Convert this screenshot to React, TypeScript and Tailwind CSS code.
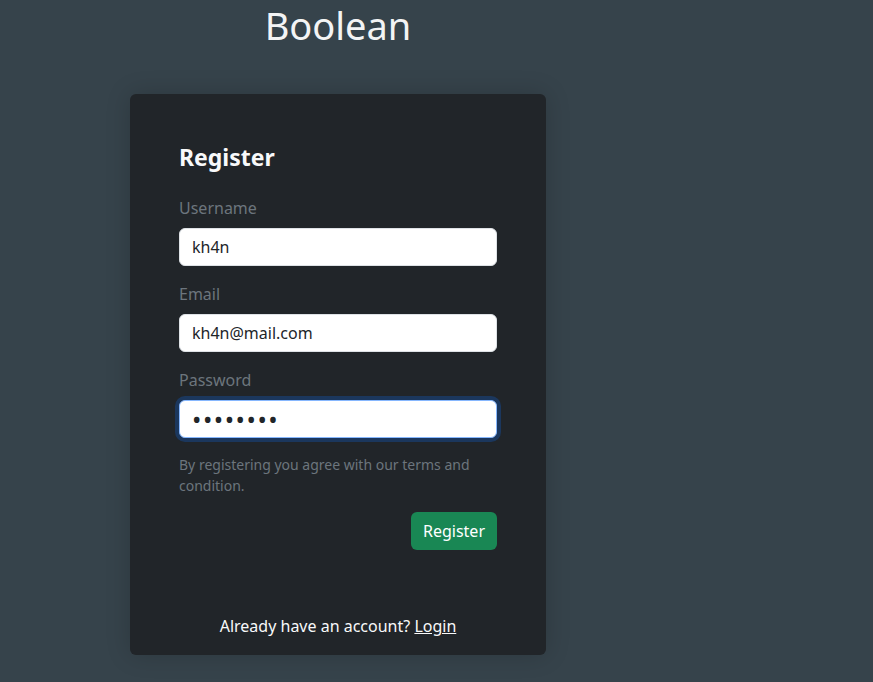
import { useState } from "react";

const fields = [
  { key: "username", label: "Username", type: "text", value: "kh4n" },
  { key: "email", label: "Email", type: "email", value: "kh4n@mail.com" },
  { key: "password", label: "Password", type: "password", value: "kh4npass" },
];

export default function App() {
  const [values, setValues] = useState<Record<string, string>>(
    Object.fromEntries(fields.map((f) => [f.key, f.value]))
  );

  return (
    <div
      className="min-h-[682px] bg-[#36434b] text-white"
      style={{ fontFamily: '"Noto Sans", "Open Sans", sans-serif' }}
    >
      <div className="ml-[130px] w-[416px]">
        {/* title */}
        <h1 className="pt-[2px] text-center text-[38px] leading-[46px] font-normal text-[#f3f4f5] mb-[46px]">
          Boolean
        </h1>

        {/* card */}
        <div className="bg-[#212529] rounded-md shadow-[0_0_24px_rgba(0,0,0,0.18)] pt-12 px-[49px] pb-[17px]">
          <h2 className="text-[23px] font-bold leading-[31px] mb-[23px] text-[#f8f9fa]">
            Register
          </h2>

          {fields.map((f) => (
            <div key={f.key} className="mb-4">
              <label className="block text-base leading-6 text-[#6c757d] mb-2">
                {f.label}
              </label>
              <input
                type={f.type}
                value={values[f.key]}
                onChange={(e) => setValues({ ...values, [f.key]: e.target.value })}
                className={
                  f.key === "password"
                    ? "w-full h-[38px] rounded-md bg-white px-3 text-[25px] text-[#212529] border border-[#86b7fe] outline-none shadow-[0_0_0_4px_rgba(13,110,253,0.25)] tracking-[1.5px]"
                    : "w-full h-[38px] rounded-md bg-white px-3 text-base text-[#212529] border border-[#dee2e6] outline-none"
                }
              />
            </div>
          ))}

          <p className="text-sm leading-[21px] text-[#6c757d] mb-4">
            By registering you agree with our terms and condition.
          </p>

          <div className="flex justify-end">
            <button className="h-[38px] px-3 rounded-md bg-[#198754] text-white text-base">
              Register
            </button>
          </div>

          <p className="mt-[64px] text-center text-base leading-6 text-[#f8f9fa]">
            Already have an account?{" "}
            <a href="#" className="underline">
              Login
            </a>
          </p>
        </div>
      </div>
    </div>
  );
}
